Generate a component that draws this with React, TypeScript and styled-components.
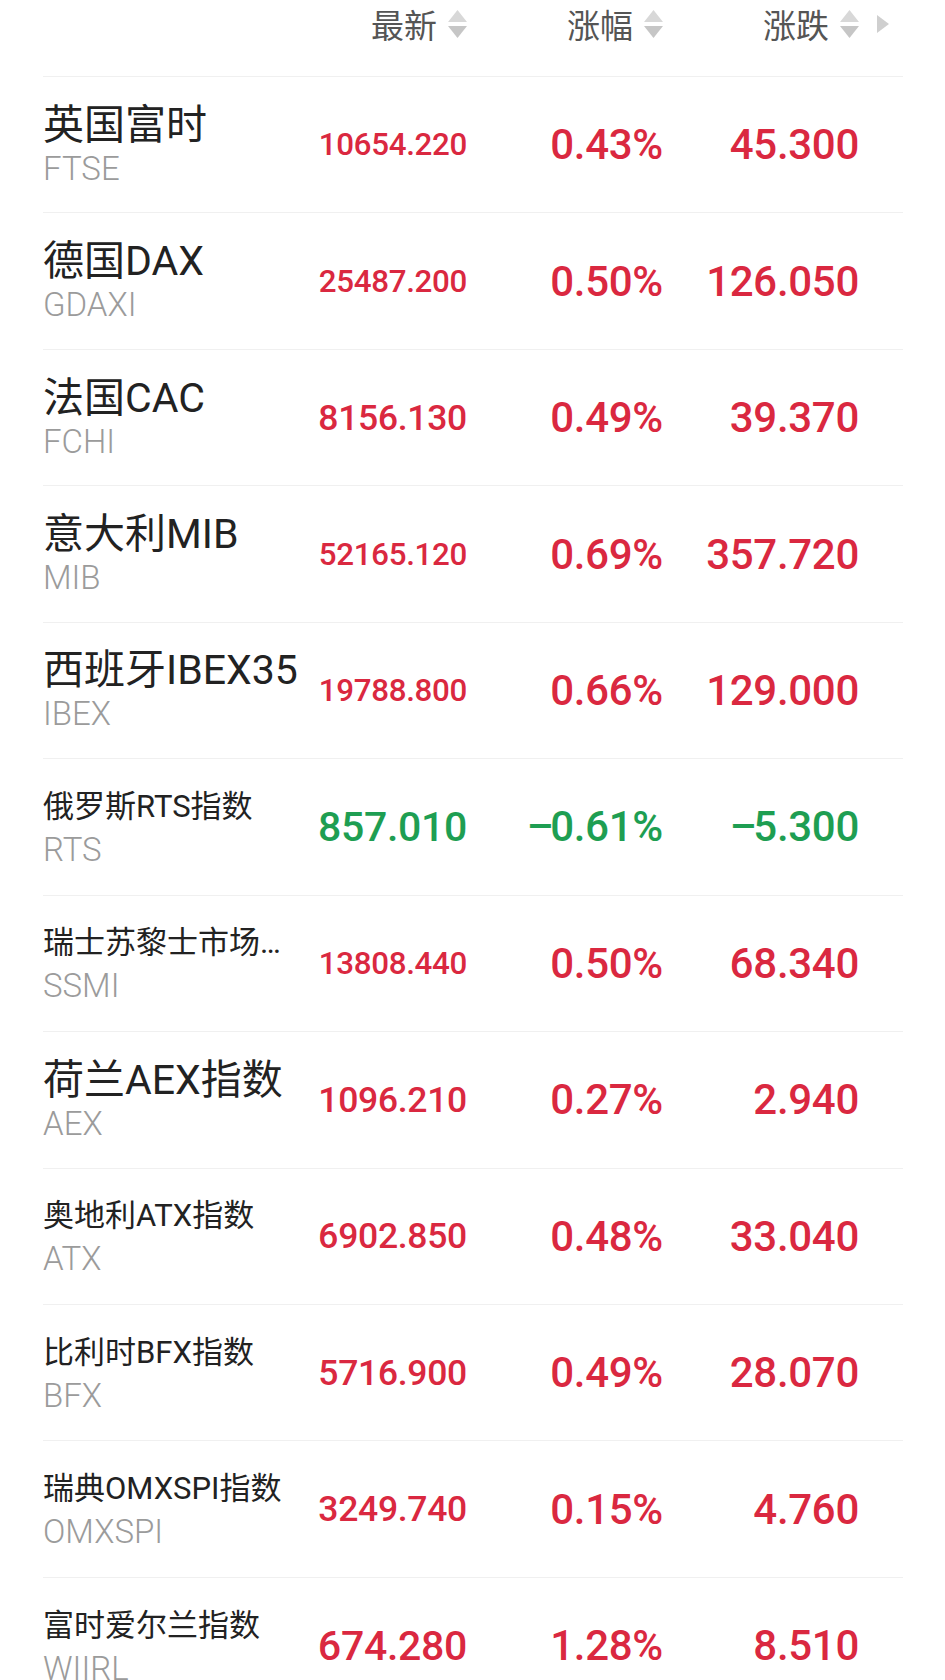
import styled, { createGlobalStyle } from "styled-components";

type Quote = {
  name: string;
  code: string;
  last: string;
  pct: string;
  chg: string;
  big?: boolean;
};

const quotes: Quote[] = [
  { name: "英国富时", code: "FTSE", last: "10654.220", pct: "0.43%", chg: "45.300", big: true },
  { name: "德国DAX", code: "GDAXI", last: "25487.200", pct: "0.50%", chg: "126.050", big: true },
  { name: "法国CAC", code: "FCHI", last: "8156.130", pct: "0.49%", chg: "39.370", big: true },
  { name: "意大利MIB", code: "MIB", last: "52165.120", pct: "0.69%", chg: "357.720", big: true },
  { name: "西班牙IBEX35", code: "IBEX", last: "19788.800", pct: "0.66%", chg: "129.000", big: true },
  { name: "俄罗斯RTS指数", code: "RTS", last: "857.010", pct: "-0.61%", chg: "-5.300" },
  { name: "瑞士苏黎士市场指数", code: "SSMI", last: "13808.440", pct: "0.50%", chg: "68.340" },
  { name: "荷兰AEX指数", code: "AEX", last: "1096.210", pct: "0.27%", chg: "2.940", big: true },
  { name: "奥地利ATX指数", code: "ATX", last: "6902.850", pct: "0.48%", chg: "33.040" },
  { name: "比利时BFX指数", code: "BFX", last: "5716.900", pct: "0.49%", chg: "28.070" },
  { name: "瑞典OMXSPI指数", code: "OMXSPI", last: "3249.740", pct: "0.15%", chg: "4.760" },
  { name: "富时爱尔兰指数", code: "WIIRL", last: "674.280", pct: "1.28%", chg: "8.510" },
];

const COLUMNS = "274px 150px 196px 196px 45px";
const NUM_SIZE = 42;
const LAST_BOX = 149;

// shrink the price so it fits its column, as the app does
const fitSize = (text: string) => {
  const em = [...text].reduce(
    (w, c) => w + (c === "." ? 0.263 : c === "%" ? 0.733 : 0.562),
    0
  );
  return Math.min(NUM_SIZE, LAST_BOX / em);
};

const GlobalStyle = createGlobalStyle`
  html, body {
    margin: 0;
    padding: 0;
    background: #fff;
  }
  body {
    font-family: Roboto, "Noto Sans CJK SC", sans-serif;
    -webkit-font-smoothing: antialiased;
  }
`;

const Page = styled.div`
  padding: 0 42px 0 43px;
  overflow: hidden;
  height: 1680px;
`;

const Header = styled.div`
  display: grid;
  grid-template-columns: ${COLUMNS};
  height: 77px;
  box-sizing: border-box;
  border-bottom: 1px solid #f0f0f0;
  align-items: start;
`;

const HeadCell = styled.div`
  display: flex;
  align-items: center;
  justify-content: flex-end;
  gap: 11px;
  height: 48px;
  font-family: "Noto Sans CJK SC", sans-serif;
  font-size: 33px;
  color: #555;
`;

const More = styled.div`
  display: flex;
  align-items: center;
  height: 48px;
  padding-left: 18px;
`;

const Row = styled.div`
  display: grid;
  grid-template-columns: ${COLUMNS};
  align-items: center;
  height: 136.45px;
  box-sizing: border-box;
  border-bottom: 1px solid #f0f0f0;
`;

const NameCell = styled.div`
  display: flex;
  flex-direction: column;
  min-width: 0;
`;

const Name = styled.div<{ $big?: boolean }>`
  max-width: 262px;
  font-size: ${(p) => (p.$big ? 41 : 31)}px;
  line-height: ${(p) => (p.$big ? 48 : 46)}px;
  color: #222;
  white-space: nowrap;
  overflow: hidden;
  text-overflow: ellipsis;
`;

const Code = styled.div`
  font-size: 33px;
  line-height: 40px;
  font-weight: 300;
  color: #9b9b9b;
`;

const Value = styled.div<{ $down?: boolean }>`
  text-align: right;
  font-family: Roboto, sans-serif;
  font-size: ${NUM_SIZE}px;
  font-weight: 500;
  letter-spacing: -0.3px;
  color: ${(p) => (p.$down ? "#1e9e52" : "#da2840")};
  white-space: nowrap;
  font-variant-numeric: tabular-nums;
`;

// the app draws its minus as a long dash, one digit wide
const Minus = styled.span`
  display: inline-block;
  width: 0.56em;
  text-align: center;
`;

const SortIcon = () => (
  <svg width="19" height="28" viewBox="0 0 19 28">
    <path d="M9.5 0 L19 12 H0 Z" fill="#d8d8d8" />
    <path d="M0 16 H19 L9.5 28 Z" fill="#c6c6c6" />
  </svg>
);

const Arrow = () => (
  <svg width="12" height="18" viewBox="0 0 12 18">
    <path d="M0 0 L12 9 L0 18 Z" fill="#cfcfcf" />
  </svg>
);

const Num = ({ text }: { text: string }) =>
  text.startsWith("-") ? (
    <>
      <Minus>–</Minus>
      {text.slice(1)}
    </>
  ) : (
    <>{text}</>
  );

export default function App() {
  return (
    <>
      <GlobalStyle />
      <Page>
        <Header>
          <div />
          <HeadCell>
            最新
            <SortIcon />
          </HeadCell>
          <HeadCell>
            涨幅
            <SortIcon />
          </HeadCell>
          <HeadCell>
            涨跌
            <SortIcon />
          </HeadCell>
          <More>
            <Arrow />
          </More>
        </Header>
        {quotes.map((q) => {
          const down = q.pct.startsWith("-");
          return (
            <Row key={q.code}>
              <NameCell>
                <Name $big={q.big}>{q.name}</Name>
                <Code>{q.code}</Code>
              </NameCell>
              <Value $down={down} style={{ fontSize: fitSize(q.last) }}>
                {q.last}
              </Value>
              <Value $down={down}>
                <Num text={q.pct} />
              </Value>
              <Value $down={down}>
                <Num text={q.chg} />
              </Value>
              <div />
            </Row>
          );
        })}
      </Page>
    </>
  );
}
